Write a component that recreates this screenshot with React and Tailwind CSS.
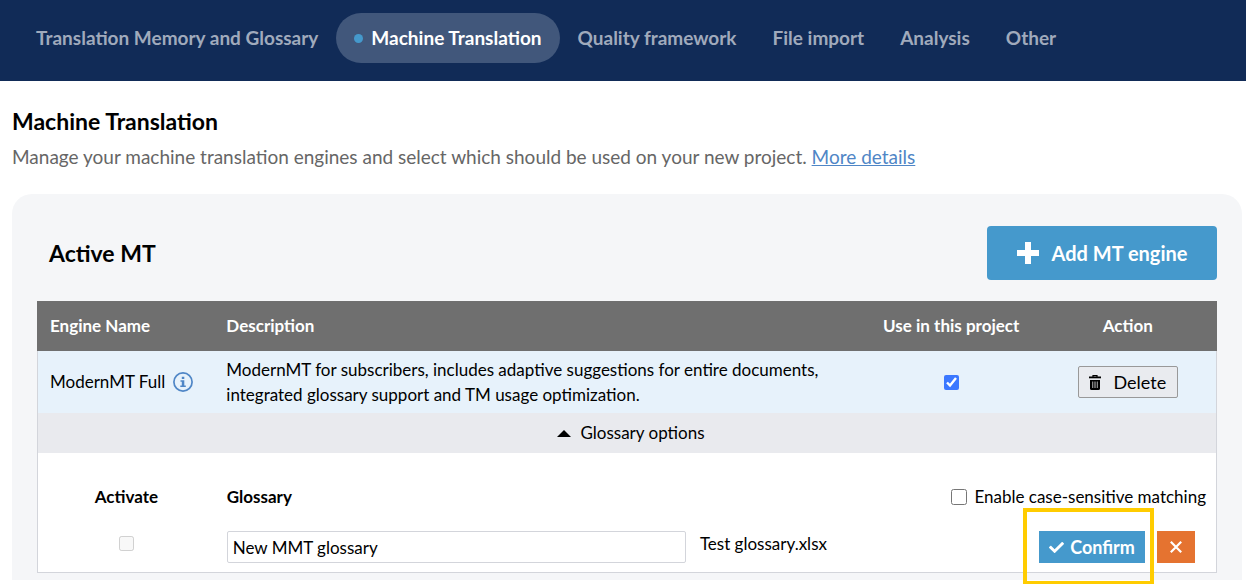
import React, { useState } from 'react';
import { FaCheck } from 'react-icons/fa';

const TABS = ['Translation Memory and Glossary', 'Machine Translation', 'Quality framework', 'File import', 'Analysis', 'Other'];

const InfoIcon = () => (
  <svg className="w-5 h-5 shrink-0" viewBox="0 0 20 20" fill="none" aria-hidden="true">
    <circle cx="10" cy="10" r="9.1" stroke="#4f86c6" strokeWidth="1.7" />
    <path d="M8.800 4.800h2.500v2.200H8.800zM7.500 8.300h3.800v5.200h1.500V15H7.300v-1.500h1.500V9.800H7.500z" fill="#4f86c6" />
  </svg>
);

const TrashIcon = () => (
  <svg className="w-3 h-[15px] shrink-0" viewBox="0 0 12 15" aria-hidden="true">
    <path d="M4 2V.6h4V2" fill="none" stroke="#000" strokeWidth="1.2" />
    <path d="M0 1.500h12v1.800H0z" />
    <path d="M1 5h10v8.500q0 1.500-1.500 1.500h-7Q1 15 1 13.500z" />
    <path d="M3.500 6.500v6.500M5.200 6.500v6.500M6.800 6.500v6.500M8.500 6.500v6.500" stroke="#999" strokeWidth=".9" />
  </svg>
);

const PlusIcon = () => (
  <svg className="h-[22px] w-[22px] shrink-0" viewBox="0 0 22 22" fill="currentColor" aria-hidden="true">
    <path d="M8 0h6v8h8v6h-8v8H8v-8H0V8h8z" />
  </svg>
);

const CrossIcon = () => (
  <svg className="h-3 w-3" viewBox="0 0 12 12" fill="none" stroke="currentColor" strokeWidth="2.200" aria-hidden="true">
    <path d="M.8.8l10.400 10.400M11.200.8L.8 11.200" />
  </svg>
);

const App = () => {
  const [activeTab, setActiveTab] = useState('Machine Translation');
  const [useInProject, setUseInProject] = useState(true);
  const [showGlossary, setShowGlossary] = useState(true);
  const [glossaryName, setGlossaryName] = useState('New MMT glossary');
  const [caseSensitive, setCaseSensitive] = useState(false);

  return (
    <div className="bg-white font-['Lato',sans-serif] text-[17px] text-black">
      <header className="bg-[#112b57] pt-[13px] pb-[18px] pl-[18px]">
        <nav className="flex">
          {TABS.map((tab) => (
            <button
              key={tab} type="button" onClick={() => setActiveTab(tab)}
              className={`flex h-[50px] items-center gap-2 rounded-full px-[18px] text-[19px] font-bold whitespace-nowrap ${
                activeTab === tab ? 'bg-[#41577b] text-white' : 'text-[#a0aabc]'
              }`}
            >
              {activeTab === tab && <span className="h-[9px] w-[9px] rounded-full bg-[#4599cc]" />}
              {tab}
            </button>
          ))}
        </nav>
      </header>

      <main className="pt-6 pr-1 pb-1 pl-3">
        <h1 className="text-[23px] leading-8 font-bold">Machine Translation</h1>
        <p className="mt-2 text-[19px] leading-6 text-[#666]">
          Manage your machine translation engines and select which should be used on your new project.{' '}
          <a href="#details" className="text-[#4f86c6] underline">More details</a>
        </p>

        <section className="mt-[25px] rounded-t-[20px] bg-[#f5f6f8] px-[25px] pt-8 pb-[7px]">
          <div className="flex items-center justify-between pl-3">
            <h2 className="text-[23px] leading-8 font-bold">Active MT</h2>
            <button type="button" className="flex h-[54px] w-[230px] items-center justify-center gap-[13px] rounded bg-[#4599cc] text-xl font-bold text-white">
              <PlusIcon />
              Add MT engine
            </button>
          </div>

          <table className="mt-[21px] w-full table-fixed border-collapse">
            <thead className="border-x border-[#6f6f6f]">
              <tr className="h-[50px] bg-[#6f6f6f] text-left text-white">
                <th className="w-[15%] pl-3">Engine Name</th>
                <th className="w-[55%] pl-3">Description</th>
                <th className="w-[15%] text-center whitespace-nowrap">Use in this project</th>
                <th className="w-[15%] text-center">Action</th>
              </tr>
            </thead>
            <tbody className="border-x border-b border-[#d3d5db]">
              <tr className="h-[62px] bg-[#e7f2fb]">
                <td className="pl-3">
                  <div className="flex items-center gap-2 whitespace-nowrap">
                    ModernMT Full
                    <InfoIcon />
                  </div>
                </td>
                <td className="pl-3 pb-px leading-[25px]">
                  <p className="max-w-[600px]">
                    ModernMT for subscribers, includes adaptive suggestions for entire documents, integrated glossary support and TM usage optimization.
                  </p>
                </td>
                <td>
                  <input
                    type="checkbox" aria-label="Use in this project"
                    className="mx-auto block h-[15px] w-[15px] accent-[#3b78ff]"
                    checked={useInProject} onChange={(e) => setUseInProject(e.target.checked)}
                  />
                </td>
                <td>
                  <button type="button" className="mx-auto flex h-8 w-[100px] items-center justify-center gap-3 rounded-xs border border-[#999] bg-[#e9ebef] text-lg">
                    <TrashIcon />
                    Delete
                  </button>
                </td>
              </tr>
              <tr className="h-10 bg-[#e9eaee]">
                <td colSpan={4}>
                  <button
                    type="button" onClick={() => setShowGlossary(!showGlossary)}
                    className="mx-auto flex items-center gap-[9px] pl-2" aria-expanded={showGlossary}
                  >
                    <svg className="h-[7px] w-[14px]" viewBox="0 0 14 7" aria-hidden="true"><path d="M7 0l7 7H0z" /></svg>
                    Glossary options
                  </button>
                </td>
              </tr>
              {showGlossary && (
                <tr className="bg-white">
                  <td colSpan={4} className="pt-8 pb-[9px]">
                    <table className="w-full table-fixed border-collapse">
                      <thead>
                        <tr className="text-left leading-6">
                          <th className="w-[15%] text-center">Activate</th>
                          <th className="w-[40%] pl-3">Glossary</th>
                          <td className="w-[45%] pr-[10px]" colSpan={2}>
                            <label className="flex items-center justify-end gap-[7px]">
                              <input
                                type="checkbox" className="h-4 w-4"
                                checked={caseSensitive} onChange={(e) => setCaseSensitive(e.target.checked)}
                              />
                              Enable case-sensitive matching
                            </label>
                          </td>
                        </tr>
                      </thead>
                      <tbody>
                        <tr className="align-top leading-[25px]">
                          <td className="pt-[22px]">
                            <div className="flex h-[25px] items-center justify-center">
                              <input type="checkbox" aria-label="Activate glossary" className="h-[15px] w-[15px]" disabled />
                            </div>
                          </td>
                          <td className="pt-[22px] pl-3">
                            <input
                              type="text" aria-label="Glossary name"
                              className="block h-8 w-full rounded-xs border border-[#d3d5db] bg-white px-[5px]"
                              value={glossaryName} onChange={(e) => setGlossaryName(e.target.value)}
                            />
                          </td>
                          <td className="pt-[22px] pl-[14px]">Test glossary.xlsx</td>
                          <td className="pt-[22px] pr-[21px]">
                            <div className="flex justify-end gap-3">
                              <div className="relative">
                                <button type="button" className="flex h-8 w-[106px] items-center justify-center gap-[6px] bg-[#4599cc] text-lg font-bold text-white">
                                  <FaCheck className="h-[15px] w-[15px]" />
                                  Confirm
                                </button>
                                <span className="pointer-events-none absolute -top-[23px] -right-[9px] -bottom-[22px] -left-4 border-4 border-[#ffcc00]" />
                              </div>
                              <button type="button" aria-label="Cancel" className="flex h-8 w-[38px] items-center justify-center bg-[#e57330] text-white">
                                <CrossIcon />
                              </button>
                            </div>
                          </td>
                        </tr>
                      </tbody>
                    </table>
                  </td>
                </tr>
              )}
            </tbody>
          </table>
        </section>
      </main>
    </div>
  );
};

export default App;
